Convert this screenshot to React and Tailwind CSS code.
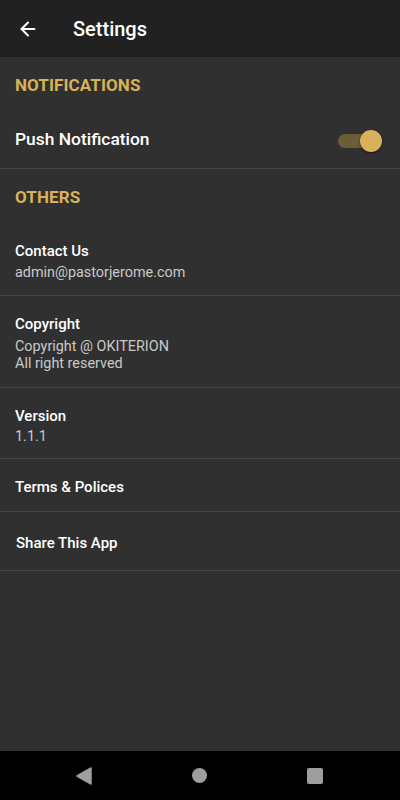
import { ArrowLeft } from 'lucide-react'

const gold = 'text-[#d8b25a]'

function SectionTitle({ children, className = '' }) {
  return (
    <div className={`px-[15px] flex items-center ${className}`}>
      <h2 className={`text-[17px] font-bold tracking-[0.1px] ${gold}`}>{children}</h2>
    </div>
  )
}

function Row({ title, lines = [], className = '', subClass = 'mt-[5px]' }) {
  return (
    <div className={`px-[15px] flex flex-col border-b border-[#454545] ${className}`}>
      <p className="text-[15px] font-medium text-white leading-[20px]">{title}</p>
      {lines.length > 0 && (
        <div className={`${subClass} text-[14.4px] text-[#c9c9c9] leading-[17px]`}>
          {lines.map((l, i) => (
            <p key={i}>{l}</p>
          ))}
        </div>
      )}
    </div>
  )
}

export default function App() {
  return (
    <div className="w-[400px] h-[800px] flex flex-col bg-[#303030] font-['Roboto',sans-serif]">
      {/* Toolbar */}
      <header className="h-[57px] shrink-0 bg-[#212121] flex items-center">
        <ArrowLeft className="ml-[17px] text-white" size={22} strokeWidth={2.2} />
        <h1 className="ml-[34px] text-[20px] font-medium text-white">Settings</h1>
      </header>

      <main className="flex-1 flex flex-col">
        <SectionTitle className="h-[56px] pt-[1px]">NOTIFICATIONS</SectionTitle>

        <div className="h-[56px] px-[15px] flex items-center justify-between border-b border-[#454545]">
          <span className="text-[17.4px] font-medium text-white -mt-[2px]">Push Notification</span>
          {/* Switch */}
          <div className="relative w-[34px] h-[14px] mr-[13px] rounded-full bg-[#6b5d38]">
            <span className="absolute -right-[10px] -top-[4px] w-[22px] h-[22px] rounded-full bg-[#d8b25a] shadow-[0_1px_2px_rgba(0,0,0,0.6)]" />
          </div>
        </div>

        <SectionTitle className="h-[56px] pt-[1px]">OTHERS</SectionTitle>

        <Row title="Contact Us" lines={['admin@pastorjerome.com']} subClass="mt-[3px]" className="h-[71px] pt-[16px]" />
        <Row title="Copyright" lines={['Copyright @ OKITERION', 'All right reserved']} subClass="mt-[4px]" className="h-[92px] pt-[18px]" />
        <Row title="Version" lines={['1.1.1']} subClass="mt-[2px]" className="h-[71px] pt-[18px]" />
        <Row title="Terms & Polices" className="h-[53px] justify-center pt-[3px]" />
        <Row title="Share This App" className="h-[59px] justify-center pt-[3px] pl-[16px]" />
      </main>

      {/* Android nav bar */}
      <nav className="h-[49px] shrink-0 bg-black flex items-center justify-between pl-[76px] pr-[77px]">
        <svg width="16" height="18" viewBox="0 0 16 18">
          <path d="M15 1 L15 17 L1 9 Z" fill="#9e9e9e" stroke="#9e9e9e" strokeLinejoin="round" strokeWidth="1.5" />
        </svg>
        <span className="w-[15px] h-[15px] rounded-full bg-[#9e9e9e]" />
        <span className="w-[16px] h-[16px] rounded-[2px] bg-[#9e9e9e]" />
      </nav>
    </div>
  )
}
